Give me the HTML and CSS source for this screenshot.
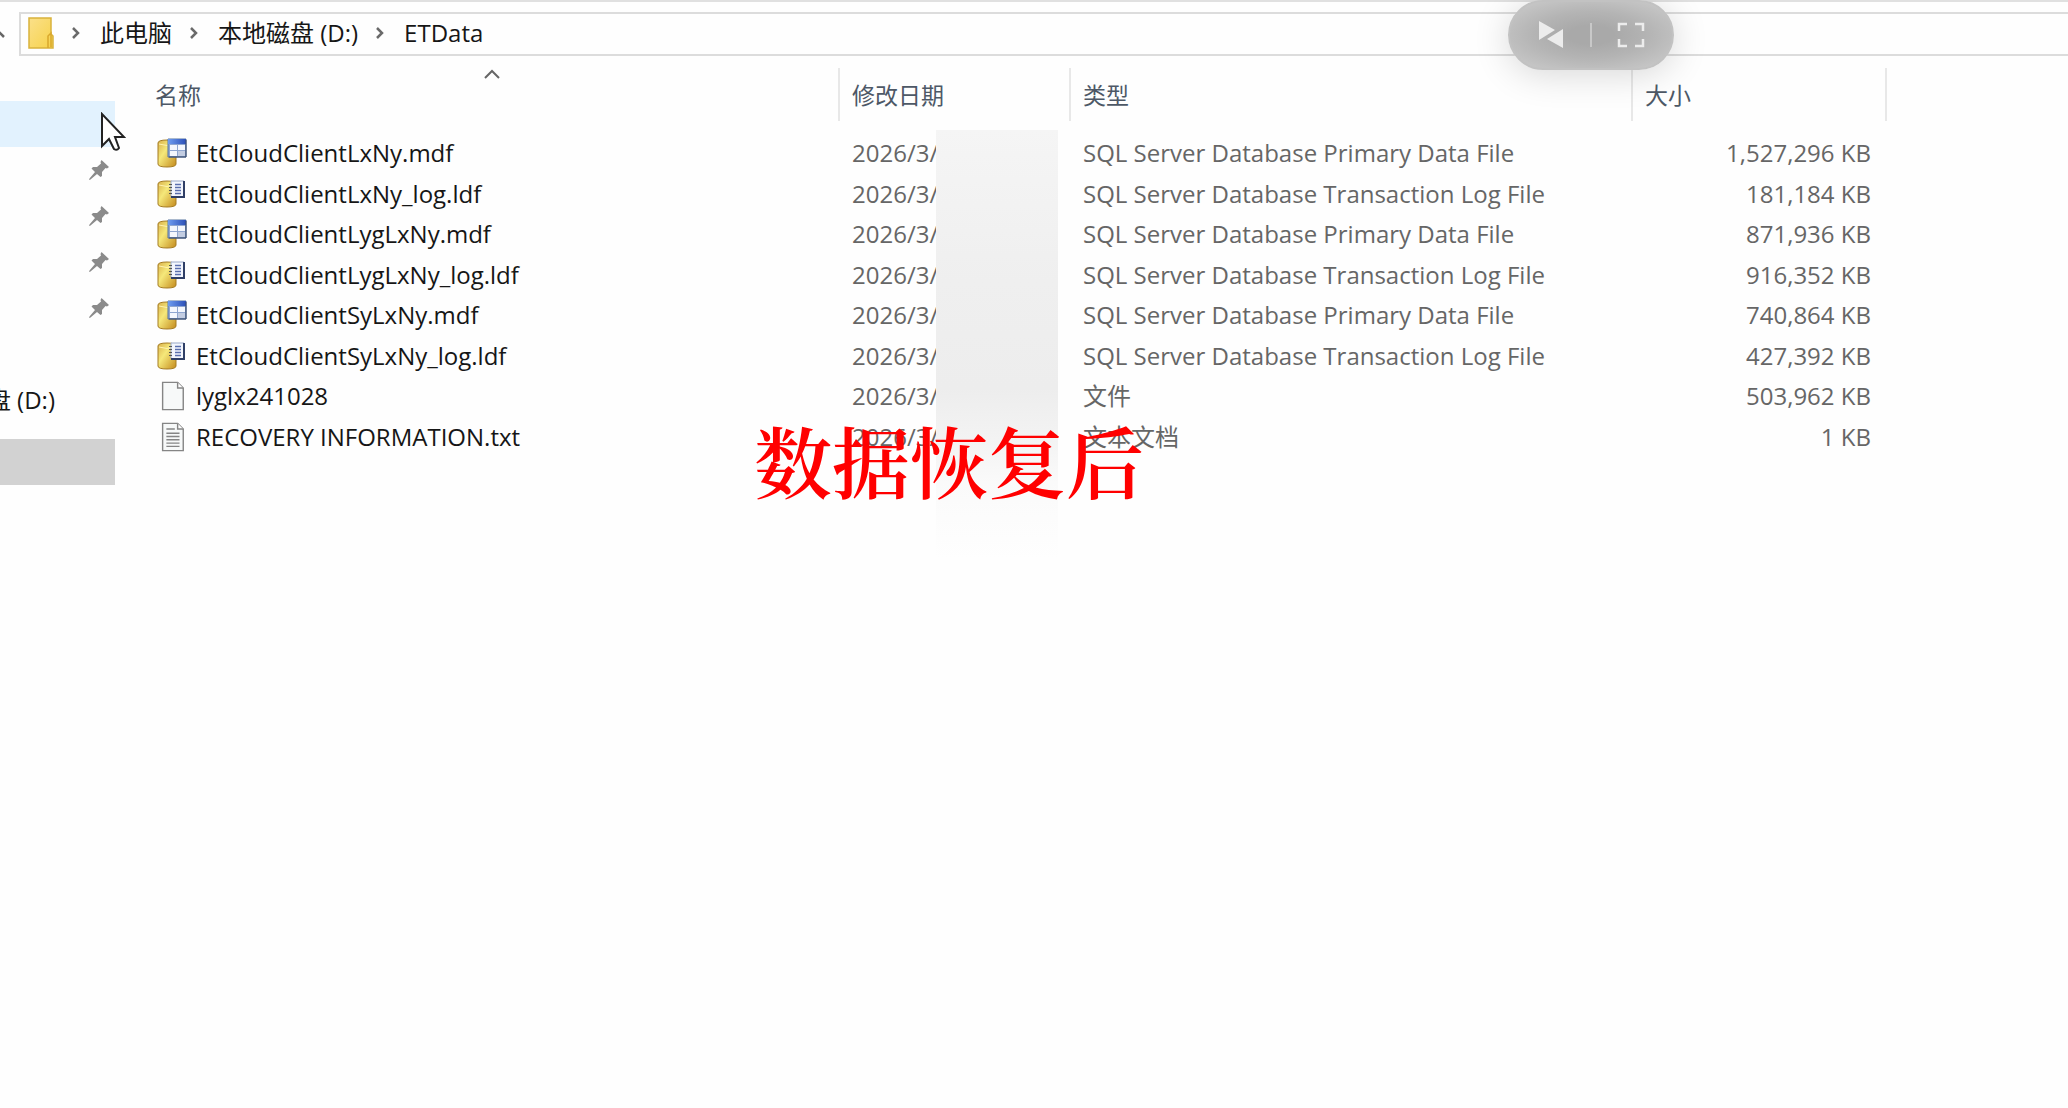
FILE: index.html
```html
<!DOCTYPE html>
<html lang="zh-CN">
<head>
<meta charset="utf-8">
<title>ETData</title>
<link rel="stylesheet" href="styles.css">
</head>
<body>
<svg class="defs" aria-hidden="true">
  <defs>
    <linearGradient id="gold" x1="0" x2="1" y1="0" y2="1">
      <stop offset="0" stop-color="#d9b04a"/><stop offset=".4" stop-color="#f5e87a"/><stop offset="1" stop-color="#c48a1c"/>
    </linearGradient>
    <linearGradient id="folder" x1="0" x2="1" y1="0" y2="1">
      <stop offset="0" stop-color="#fbe08a"/><stop offset="1" stop-color="#f6d24a"/>
    </linearGradient>
    <linearGradient id="blue" x1="0" x2="1">
      <stop offset="0" stop-color="#6f9df0"/><stop offset="1" stop-color="#2c50b8"/>
    </linearGradient>
    <symbol id="i-mdf" viewBox="0 0 30 30">
      <path d="M1 5q0-3 9-3t9 3v21q0 3-9 3T1 26z" fill="url(#gold)" stroke="#a57c22"/>
      <path d="M2 6q8 3 16 0" fill="none" stroke="#fff3b0"/>
      <path d="M11 1h18v18H11z" fill="#8fa6d0" stroke="#56749f"/>
      <path d="M11 1h18v5H11z" fill="url(#blue)"/>
      <path d="M13 7h7v5h-7zM21 7h7v5h-7zM13 13h7v5h-7z" fill="#f4f7fd"/>
      <path d="M21 13h7v5h-7z" fill="#c3cde2"/>
      <path d="M29 2v17H12" fill="none" stroke="#3b4a6b"/>
    </symbol>
    <symbol id="i-ldf" viewBox="0 0 30 30">
      <path d="M1 5q0-3 9-3t9 3v20q0 3-9 3T1 25z" fill="url(#gold)" stroke="#a57c22"/>
      <path d="M2 6q8 3 16 0" fill="none" stroke="#fff3b0"/>
      <path d="M14 2h13v16H14z" fill="#f3f6fd" stroke="#9aa9c8"/>
      <path d="M27 2v16H14" fill="none" stroke="#2f3f66" stroke-width="2"/>
      <path d="M18 5.500h6M18 8.500h6M18 11.500h6M18 14.500h6" stroke="#5a6fae" stroke-width="1.500"/>
      <path d="M12 5.500h3M12 8.500h3M12 11.500h3M12 14.500h3" stroke="#555"/>
    </symbol>
    <symbol id="i-file" viewBox="0 0 30 32">
      <path d="M5 1.500h16l6 6V30.500H5z" fill="#f7f9f9" stroke="#858585" stroke-width="1.500"/>
      <path d="M21 1.500v6h6" fill="#fff" stroke="#858585" stroke-width="1.500"/>
    </symbol>
    <symbol id="i-pin" viewBox="0 0 20 20">
      <path d="M12.500 0 20 7l-2 1.500-1.500-.5-3.500 4v4l-1.500 1L8 14l-6.500 5.500L0 20l.5-1.500L6 12 2.500 8.500 4 7h4l4-3.500L11.500 2z" fill="#8b8b8b"/>
    </symbol>
    <symbol id="i-chev" viewBox="0 0 10 14">
      <path d="m2 2 5 5-5 5" fill="none" stroke="#6a6a6a" stroke-width="2.500"/>
    </symbol>
  </defs>
</svg>

<header class="address">
  <button class="recent" aria-label="最近"><svg viewBox="0 0 10 8"><path d="m1 7 4-4 4 4" fill="none" stroke="#666" stroke-width="2.500"/></svg></button>
  <nav class="crumbs" aria-label="路径">
    <svg class="folder" viewBox="0 0 26 32"><path d="M1 1h22v16l2 2v12H1z" fill="url(#folder)" stroke="#d9b23c" stroke-width="1.500"/><path d="M20 31V19l3-3v14" fill="none" stroke="#d9a82c" stroke-width="1.500"/></svg>
    <svg class="chev"><use href="#i-chev"/></svg>
    <a href="#">此电脑</a>
    <svg class="chev"><use href="#i-chev"/></svg>
    <a href="#">本地磁盘 (D:)</a>
    <svg class="chev"><use href="#i-chev"/></svg>
    <a href="#">ETData</a>
  </nav>
</header>

<div class="body">
  <aside class="side">
    <ul>
      <li class="hover"></li>
      <li><svg class="pin"><use href="#i-pin"/></svg></li>
      <li><svg class="pin"><use href="#i-pin"/></svg></li>
      <li><svg class="pin"><use href="#i-pin"/></svg></li>
      <li><svg class="pin"><use href="#i-pin"/></svg></li>
      <li></li>
      <li class="drive"><a href="#">盘 (D:)</a></li>
      <li class="current"></li>
    </ul>
    <svg class="pointer" viewBox="0 0 26 40"><path d="M2 2v32l7-7 5 10q3 2 5-1l-4-11h9z" fill="#fff" stroke="#222" stroke-width="2"/></svg>
  </aside>

  <main class="files">
    <table>
      <colgroup><col class="c-name"><col class="c-date"><col class="c-type"><col class="c-size"></colgroup>
      <thead>
        <tr>
          <th aria-sort="ascending">名称<svg class="sort" viewBox="0 0 16 10"><path d="m1 9 7-7 7 7" fill="none" stroke="#666" stroke-width="2"/></svg></th>
          <th>修改日期</th><th>类型</th><th>大小</th>
        </tr>
      </thead>
      <tbody>
        <tr><td><div class="name"><svg class="icon"><use href="#i-mdf"/></svg>EtCloudClientLxNy.mdf</div></td><td>2026/3/</td><td>SQL Server Database Primary Data File</td><td>1,527,296 KB</td></tr>
        <tr><td><div class="name"><svg class="icon"><use href="#i-ldf"/></svg>EtCloudClientLxNy_log.ldf</div></td><td>2026/3/</td><td>SQL Server Database Transaction Log File</td><td>181,184 KB</td></tr>
        <tr><td><div class="name"><svg class="icon"><use href="#i-mdf"/></svg>EtCloudClientLygLxNy.mdf</div></td><td>2026/3/</td><td>SQL Server Database Primary Data File</td><td>871,936 KB</td></tr>
        <tr><td><div class="name"><svg class="icon"><use href="#i-ldf"/></svg>EtCloudClientLygLxNy_log.ldf</div></td><td>2026/3/</td><td>SQL Server Database Transaction Log File</td><td>916,352 KB</td></tr>
        <tr><td><div class="name"><svg class="icon"><use href="#i-mdf"/></svg>EtCloudClientSyLxNy.mdf</div></td><td>2026/3/</td><td>SQL Server Database Primary Data File</td><td>740,864 KB</td></tr>
        <tr><td><div class="name"><svg class="icon"><use href="#i-ldf"/></svg>EtCloudClientSyLxNy_log.ldf</div></td><td>2026/3/</td><td>SQL Server Database Transaction Log File</td><td>427,392 KB</td></tr>
        <tr><td><div class="name"><svg class="icon"><use href="#i-file"/></svg>lyglx241028</div></td><td>2026/3/</td><td>文件</td><td>503,962 KB</td></tr>
        <tr><td><div class="name"><svg class="icon" viewBox="0 0 30 32"><use href="#i-file"/><path d="M9 7.500h9M9 12h14M9 15.500h14M9 19h14M9 22.500h14M9 26h14" stroke="#858585" stroke-width="1.500"/></svg>RECOVERY INFORMATION.txt</div></td><td>2026/3/</td><td>文本文档</td><td>1 KB</td></tr>
      </tbody>
    </table>
    <div class="mask"></div>
    <p class="caption">数据恢复后</p>
  </main>
</div>

<div class="player" role="toolbar" aria-label="播放">
  <button aria-label="翻转"><svg viewBox="0 0 28 30"><path d="M2 1v19l16-10zM26 9v19L10 19z" fill="#ececec"/></svg></button>
  <span class="bar"></span>
  <button aria-label="全屏"><svg viewBox="0 0 28 28"><path d="M2 10V3h8M18 3h8v7M26 18v7h-8M10 25H2v-7" fill="none" stroke="#ececec" stroke-width="2.500"/></svg></button>
</div>
</body>
</html>
```
FILE: styles.css
```css
* { box-sizing: border-box; }

body {
  margin: 0;
  min-height: 100vh;
  background: #fefefe;
  color: #161616;
  font: 24px/30px "Open Sans", "Noto Sans CJK SC", sans-serif;
  border-top: 2px solid #e0e0e0;
  overflow-x: hidden;
}

.defs { position: absolute; width: 0; height: 0; }
a { color: inherit; text-decoration: none; }
button { padding: 0; border: 0; background: none; display: flex; }

.address { display: flex; align-items: center; padding-top: 10px; }
.recent { width: 19px; }
.recent svg { width: 10px; height: 8px; margin-left: -5px; }
.crumbs {
  flex: 1;
  display: flex;
  align-items: center;
  height: 44px;
  padding: 0 0 2px 7px;
  border: 2px solid #dcdcdc;
  border-right: 0;
  white-space: nowrap;
}
.folder { width: 26px; height: 32px; }
.chev { width: 10px; height: 14px; margin: 0 19px 0 17px; }

.body { display: flex; padding-top: 12px; }

.side { position: relative; width: 120px; padding-top: 33px; }
.side ul { width: 115px; margin: 0; padding: 0; list-style: none; }
.side li {
  display: flex;
  align-items: center;
  justify-content: flex-end;
  height: 46px;
  padding-right: 6px;
}
.side .hover { background: #e2f2fe; }
.side .drive { width: 61px; overflow: hidden; white-space: nowrap; }
.side .current { margin-top: 16px; background: #d2d2d2; }
.pin { width: 20px; height: 20px; }
.pointer { position: absolute; left: 100px; top: 44px; width: 26px; height: 40px; }

.files { position: relative; flex: 1; }
table { table-layout: fixed; width: 1767px; border-collapse: separate; border-spacing: 0; }
.c-name { width: 720px; }
.c-date { width: 231px; }
.c-type { width: 562px; }
.c-size { width: 254px; }
th {
  position: relative;
  height: 53px;
  padding: 0 0 0 12px;
  border-right: 2px solid #e8e8e8;
  color: #4d5866;
  font-size: 23px;
  font-weight: 400;
  text-align: left;
}
th:first-child { padding-left: 35px; }
.sort { position: absolute; right: 338px; top: 1px; width: 16px; height: 10px; }
tbody::before { content: ""; display: block; height: 12px; }
td { height: 40px; padding: 0 0 0 12px; color: #666; white-space: nowrap; }
tr:nth-child(even) td { height: 41px; }
td:first-child { padding-left: 37px; color: #161616; }
td:last-child { padding: 0 16px 0 0; text-align: right; }
.name { display: flex; align-items: center; gap: 9px; }
.icon { width: 30px; height: 30px; }

.mask {
  position: absolute;
  left: 816px;
  top: 62px;
  width: 122px;
  height: 430px;
  background: linear-gradient(#f5f5f5, #efefef 35%, #ededed 60%, #f3f3f3 72%, #fafafa 82%, #fcfcfc 90%, #fefefe);
}
.caption {
  position: absolute;
  left: 634px;
  top: 341px;
  margin: 0;
  color: #f00;
  font: 600 78px/100px "Noto Serif CJK SC", "Noto Sans CJK SC", serif;
  white-space: nowrap;
}

.player {
  position: absolute;
  right: 394px;
  top: 0;
  display: flex;
  align-items: center;
  justify-content: space-between;
  width: 166px;
  height: 70px;
  padding: 0 27px;
  border: 2px solid #c2c2c2;
  border-radius: 35px;
  background: radial-gradient(ellipse at center, #a9a9a9 20%, #b4b4b4 50%, #cdcdcd);
  box-shadow: 0 4px 36px rgba(0, 0, 0, .16);
}
.player svg { width: 28px; height: 30px; }
.bar { width: 2px; height: 24px; background: #c8c8c8; }
```
